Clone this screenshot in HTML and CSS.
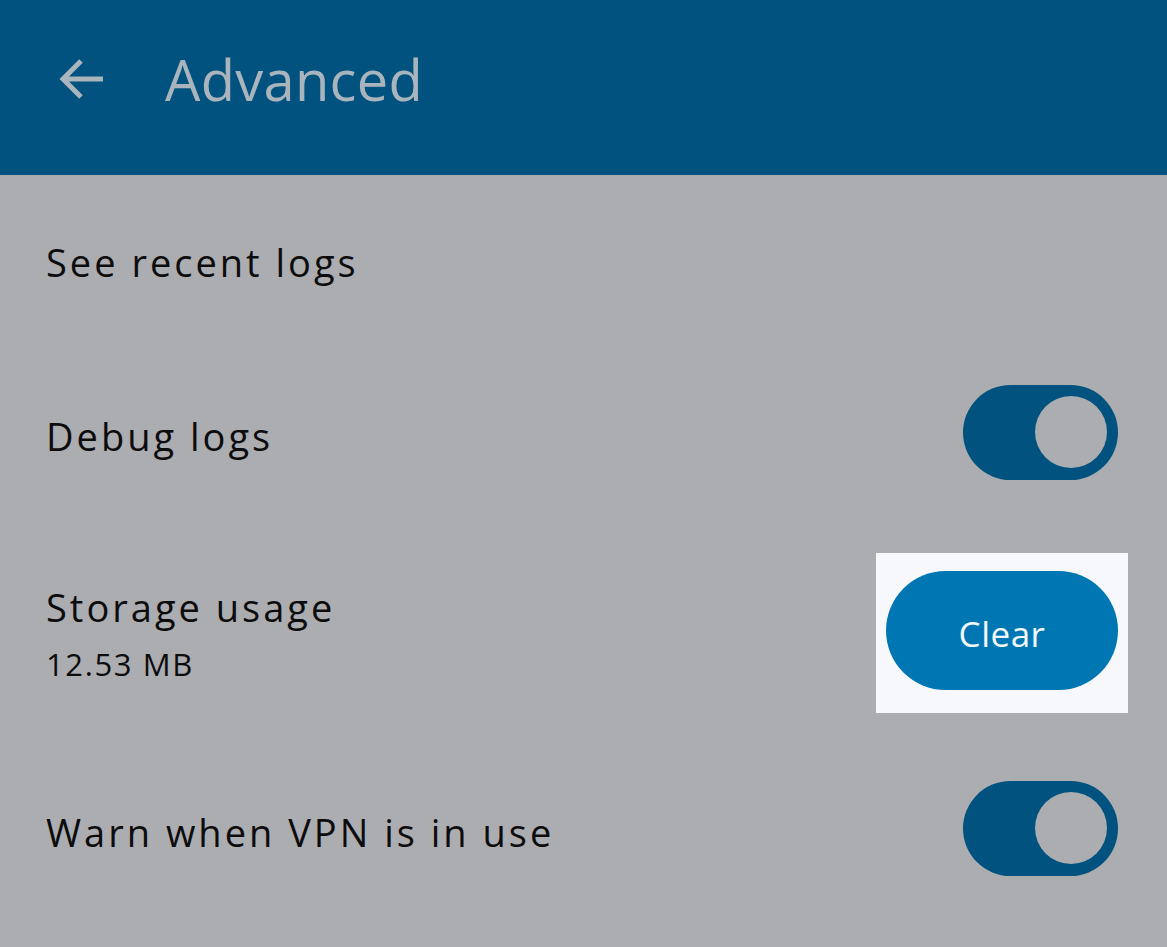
FILE: index.html
```html
<!DOCTYPE html>
<html lang="en">
<head>
    <meta charset="UTF-8">
    <meta name="viewport" content="width=device-width, initial-scale=1.0">
    <title>Advanced</title>
    <link rel="stylesheet" href="styles.css">
</head>
<body>
    <header class="app-bar">
        <svg class="back-icon" viewBox="0 0 48 48" width="48" height="48">
            <path d="M46 24H6M24 6L6 24l18 18" fill="none" stroke="#a9b4bd" stroke-width="5" stroke-linecap="butt"/>
        </svg>
        <h1>Advanced</h1>
    </header>
    <main class="settings">
        <div class="row row-logs">
            <span class="label">See recent logs</span>
        </div>
        <div class="row row-debug">
            <span class="label">Debug logs</span>
            <div class="switch"><div class="knob"></div></div>
        </div>
        <div class="row row-storage">
            <div class="text">
                <span class="label">Storage usage</span>
                <span class="sub">12.53 MB</span>
            </div>
            <div class="highlight">
                <button class="clear-button">Clear</button>
            </div>
        </div>
        <div class="row row-vpn">
            <span class="label">Warn when VPN is in use</span>
            <div class="switch"><div class="knob"></div></div>
        </div>
    </main>
</body>
</html>
```

FILE: styles.css
```css
body {
    margin: 0;
    height: 947px;
    overflow: hidden;
    font-family: "Open Sans", "Noto Sans", sans-serif;
    background-color: #acadb1; /* dimmed page */
    color: #0c0c0d;
}
.app-bar {
    height: 175px;
    box-sizing: border-box;
    display: flex;
    align-items: center;
    padding: 0 0 18px 57px;
    background-color: #01527e;
}
.back-icon {
    width: 48px;
    height: 48px;
    margin-right: 60px;
}
.app-bar h1 {
    margin: 0;
    font-size: 56px;
    font-weight: 400;
    color: #a9b4bd;
    letter-spacing: 0.3px;
}
.row {
    display: flex;
    align-items: center;
    justify-content: space-between;
    padding: 0 49px 0 46px;
}
.row-logs { height: 174px; }
.row-debug { height: 174px; }
.row-debug .switch { margin-top: -8px; }
.row-storage { height: 216px; padding-right: 39px; }
.row-vpn { height: 178px; padding-top: 4px; }
.row-vpn .switch { margin-top: -8px; }
.label {
    font-size: 38px;
    letter-spacing: 3px;
}
.text {
    display: flex;
    flex-direction: column;
    margin-top: 4px;
}
.sub {
    font-size: 31px;
    margin-top: 10px;
    letter-spacing: 1.6px;
}
.switch {
    width: 155px;
    height: 95px;
    box-sizing: border-box;
    border-radius: 48px;
    background-color: #01527e;
    display: flex;
    justify-content: flex-end;
    align-items: center;
    padding-right: 11px;
}
.knob {
    width: 72px;
    height: 72px;
    border-radius: 50%;
    background-color: #acadb1;
}
.highlight {
    margin-top: 4px;
    padding: 18px 10px 23px 10px;
    background-color: #f6f8fc;
}
.clear-button {
    width: 232px;
    height: 119px;
    padding-top: 6px;
    border: none;
    border-radius: 60px;
    background-color: #0077b3;
    color: #f4f7fb;
    font-family: inherit;
    font-size: 35px;
    letter-spacing: 0.5px;
}
```
